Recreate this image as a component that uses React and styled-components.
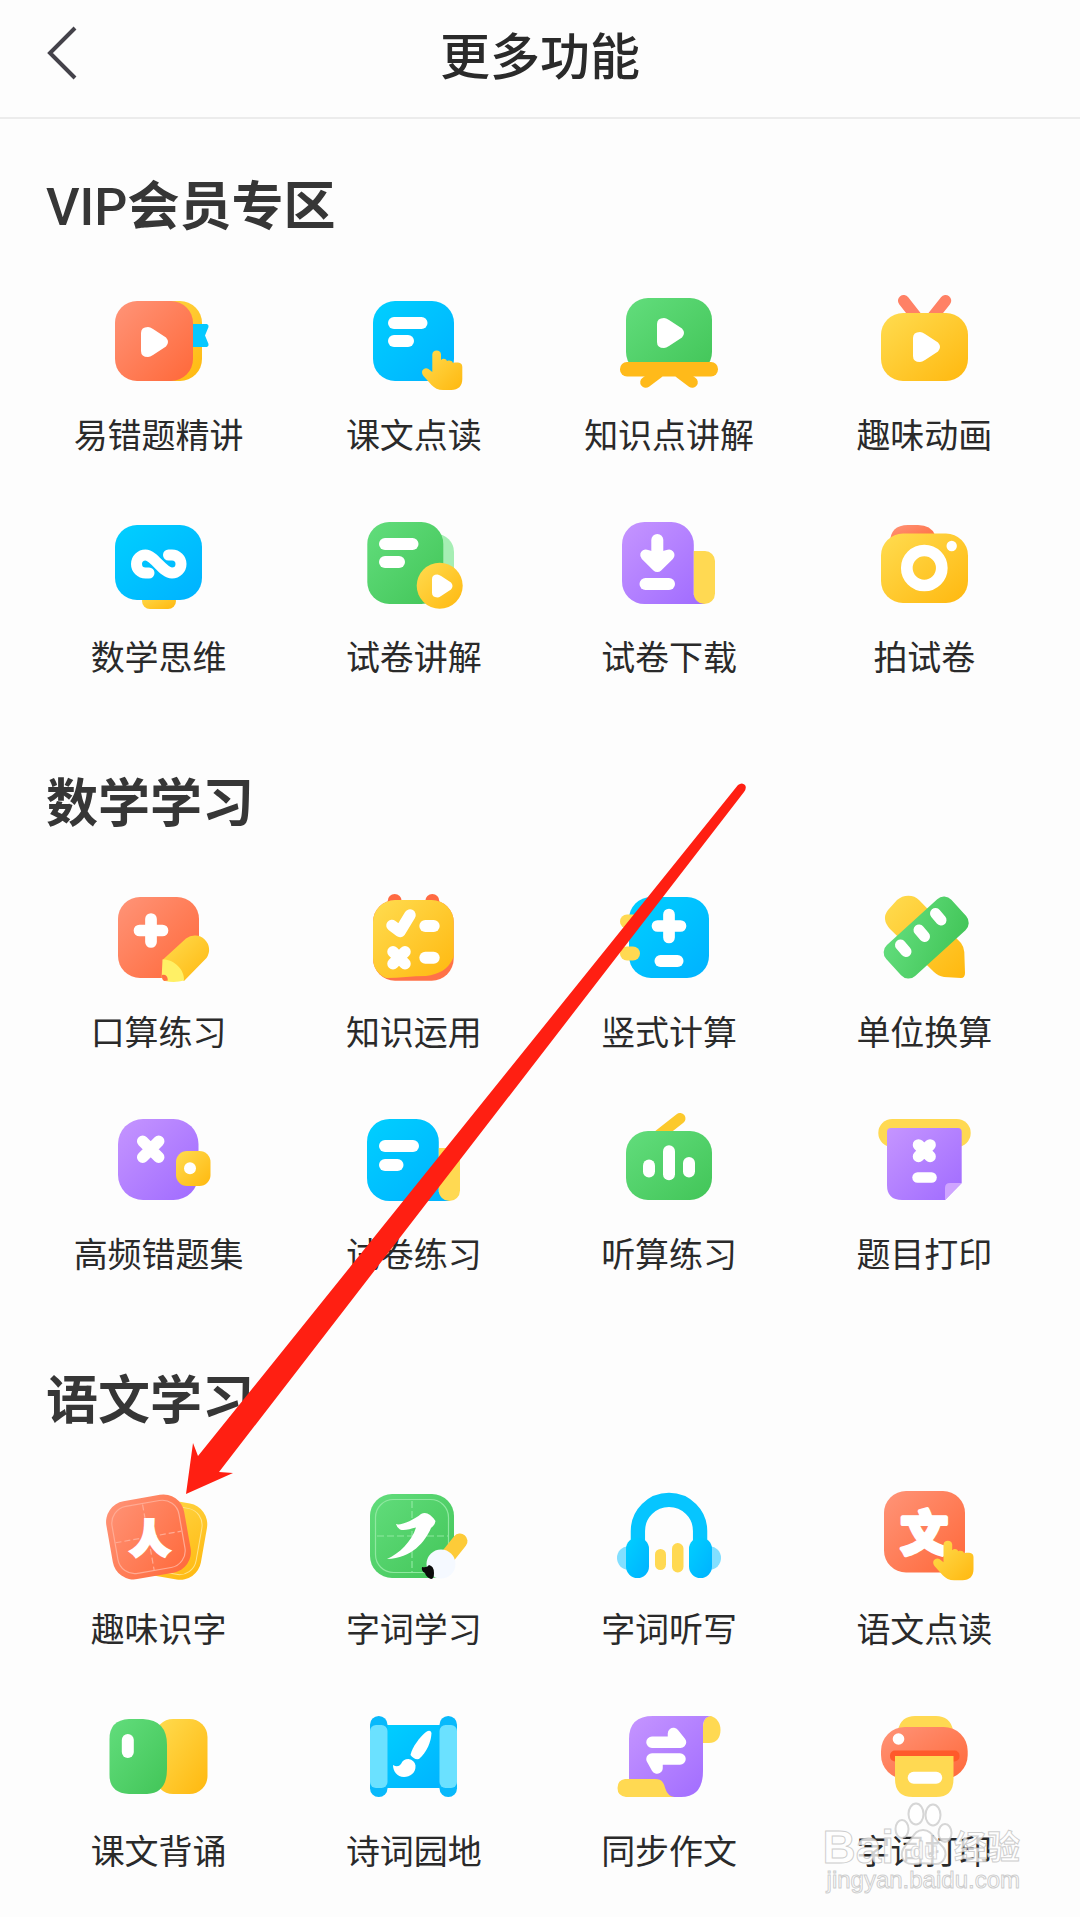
import React from 'react';
import styled, {createGlobalStyle} from 'styled-components';

const GlobalStyle = createGlobalStyle`
	* {
		box-sizing: border-box;
	}
	body {
		margin: 0;
		background: #fdfdfd;
		color: #2a2a2a;
		font-family: "Noto Sans CJK SC", sans-serif;
	}
`;

const Page = styled.div`
	position: relative;
	overflow: hidden;
`;

const Header = styled.header`
	display: grid;
	grid-template-columns: 1fr auto 1fr;
	align-items: center;
	height: 119px;
	padding: 0 40px 12px;
	border-bottom: 2px solid #ececec;
`;

const BackButton = styled.button`
	display: flex;
	justify-self: start;
	padding: 0;
	border: 0;
	background: none;
	cursor: pointer;
	svg {
		width: 44px;
		height: 60px;
	}
`;

const PageTitle = styled.h1`
	margin: 0;
	font-size: 50px;
	line-height: 60px;
	font-weight: 500;
`;

const Section = styled.section`
	padding: 57px 28px 36px 31px;
`;

const SectionTitle = styled.h2`
	margin: 0 0 63px;
	padding-left: 15px;
	color: #363636;
	font-size: 52px;
	line-height: 54px;
	font-weight: 700;
`;

const Latin = styled.span`
	font-family: Roboto, sans-serif;
	font-weight: 500;
	line-height: 0;
`;

const Grid = styled.div`
	display: grid;
	grid-template-columns: repeat(4, 1fr);
	row-gap: 57px;
`;

const Tile = styled.a`
	display: flex;
	flex-direction: column;
	align-items: center;
	gap: 17px;
	color: inherit;
	text-decoration: none;
`;

const TileIcon = styled.svg`
	width: 100px;
	height: 100px;
	overflow: visible;
	text {
		font-family: "Noto Sans CJK SC", sans-serif;
		font-weight: 900;
		text-anchor: middle;
	}
`;

const TileLabel = styled.span`
	font-size: 34px;
	line-height: 48px;
	white-space: nowrap;
`;

const Pointer = styled.svg`
	position: absolute;
	top: 0;
	left: 0;
	width: 100%;
	pointer-events: none;
`;

const Watermark = styled.div`
	position: absolute;
	right: 60px;
	bottom: 20px;
	display: flex;
	flex-direction: column;
	align-items: flex-end;
	color: rgba(255, 255, 255, 0.8);
	font-family: "Liberation Sans", "Noto Sans CJK SC", sans-serif;
	-webkit-text-stroke: 1px rgba(184, 184, 184, 0.7);
	pointer-events: none;
`;

const WatermarkBrand = styled.div`
	display: flex;
	align-items: flex-end;
	font-size: 46px;
	line-height: 46px;
	font-weight: 700;
	svg {
		width: 60px;
		height: 64px;
		margin-bottom: 4px;
	}
`;

const WatermarkSuffix = styled.span`
	font-size: 33px;
	line-height: 44px;
`;

const WatermarkSite = styled.div`
	font-size: 24px;
	line-height: 20px;
`;

const Gradient = ({id, from, to}) => (
	<linearGradient id={id} x1="0" y1="0" x2="1" y2="1">
		<stop offset="0" stopColor={from}/>
		<stop offset="1" stopColor={to}/>
	</linearGradient>
)

const RED = 'url(#red)';
const YELLOW = 'url(#yellow)';
const BLUE = 'url(#blue)';
const GREEN = 'url(#green)';
const PURPLE = 'url(#purple)';
const LEMON = '#ffd952';

// x, y - center of the left side
const Play = ({x, y, size = 1}) => (
	<path
		transform={`translate(${x} ${y}) scale(${size})`}
		d="M0 -9 Q0 -15 7 -15 Q9 -15 12 -13 L25 -4.500 Q29 0 25 4.500 L12 13 Q9 15 7 15 Q0 15 0 9z"
		fill="#fff"
	/>
)

const Bar = ({x, y, w, h}) => (
	<rect x={x} y={y} width={w} height={h} rx={Math.min(w, h) / 2} fill="#fff"/>
)

const Plus = ({x, y}) => (
	<path d={`M${x - 11.5} ${y}h23M${x} ${y - 11.5}v23`} stroke="#fff" strokeWidth="11.7" strokeLinecap="round"/>
)

const Cross = ({x, y, r}) => (
	<path
		d={`M${x - r} ${y - r}l${2 * r} ${2 * r}M${x + r} ${y - r}l${-2 * r} ${2 * r}`}
		stroke="#fff"
		strokeWidth="11.5"
		strokeLinecap="round"
	/>
)

const Hand = ({x = 0, y = 0}) => (
	<path
		transform={`translate(${x} ${y})`}
		d="M68.300 61.300a4.400 4.400 0 0 1 8.700 0V67c2-2 5-1.500 6 1c2.500-1 5-.5 6 2c5-1 9.300-.5 9.300 4V86c0 7-4 11-11 11H79c-5 0-8.500-2-11.500-5L59.500 83c-4-5 1-9.500 5-7l3.800 3z"
		fill={YELLOW}
	/>
)

// sheet with a folded tab on the right
const TabSheet = ({fill}) => (
	<>
		<path d="M26 7H52A22.500 22.500 0 0 1 74.800 30V80L86 89H26A22.500 22.500 0 0 1 3 66V30A22.500 22.500 0 0 1 26 7z" fill={fill}/>
		<path d="M74.800 36H86a10 10 0 0 1 10 10V78.500a10.600 10.600 0 0 1-21.200 0z" fill={LEMON}/>
	</>
)

const icons = {
	mistakes: (
		<>
			<rect x="20" y="8" width="73" height="80" rx="22" fill={YELLOW}/>
			<rect x="6" y="8" width="78" height="80" rx="22" fill={RED}/>
			<path d="M84 31H98q2 1 1.500 3L96 42.500L99.500 51q.5 2-1.500 3H84z" fill="#06c8ff"/>
			<Play x={32} y={49}/>
		</>
	),
	reading: (
		<>
			<rect x="9" y="8" width="81" height="80" rx="22" fill={BLUE}/>
			<Bar x={24} y={24} w={39.5} h={12}/>
			<Bar x={24} y={42} w={26} h={12}/>
			<Hand/>
		</>
	),
	knowledge: (
		<>
			<rect x="7" y="5" width="86" height="76" rx="22" fill={GREEN}/>
			<path d="M39 80L26.700 89.300M61 80L73.300 89.300" stroke="#ffba1a" strokeWidth="11" strokeLinecap="round"/>
			<rect x="1" y="69" width="98" height="14.500" rx="7" fill="#ffba1a"/>
			<Play x={38} y={40}/>
		</>
	),
	cartoon: (
		<>
			<path d="M29.700 7.700L44 26M71.500 7.700L57 26" stroke="#ff8165" strokeWidth="11.500" strokeLinecap="round"/>
			<rect x="7" y="20" width="87" height="68" rx="22" fill={YELLOW}/>
			<Play x={39} y={54}/>
		</>
	),
	thinking: (
		<>
			<rect x="33" y="78" width="34" height="16" rx="8" fill={YELLOW}/>
			<rect x="6" y="10" width="87" height="75" rx="22" fill={BLUE}/>
			<path
				d="M40 58H36.500A9 9 0 0 1 36.500 40C45 40 54 58 63 58A9 9 0 0 0 63 40H59.500"
				fill="none" stroke="#fff" strokeWidth="11" strokeLinecap="round"
			/>
		</>
	),
	paperExplain: (
		<>
			<rect x="40" y="19" width="50" height="66" rx="18" fill="#a6eeb4"/>
			<rect x="3.300" y="7" width="76" height="82" rx="22" fill={GREEN}/>
			<Bar x={15} y={23} w={39.5} h={12}/>
			<Bar x={15} y={41} w={26} h={12}/>
			<circle cx="75.700" cy="70.700" r="23" fill={YELLOW}/>
			<Play x={68} y={71} size={0.76}/>
		</>
	),
	download: (
		<>
			<TabSheet fill={PURPLE}/>
			<path d="M38.300 25V45" stroke="#fff" strokeWidth="12" strokeLinecap="round"/>
			<path d="M26.700 40L38.300 51.500L50 40L38.300 43z" fill="#fff" stroke="#fff" strokeWidth="11" strokeLinejoin="round"/>
			<Bar x={20.5} y={63} w={35.5} h={12}/>
		</>
	),
	camera: (
		<>
			<path d="M16 28q0-18 18-18H44q13 0 17 10v8z" fill={RED}/>
			<rect x="7" y="18.500" width="87" height="69.500" rx="22" fill={YELLOW}/>
			<circle cx="50.300" cy="53" r="17.500" fill="none" stroke="#fff" strokeWidth="11.700"/>
			<circle cx="77.700" cy="31" r="5.200" fill="#fff"/>
		</>
	),
	oral: (
		<>
			<rect x="9" y="7" width="81" height="81" rx="22" fill={RED}/>
			<Plus x={42} y={40.5}/>
			<path d="M53.500 70L77 48.500a14.300 14.300 0 0 1 20.500 19.500L75 91z" fill={YELLOW}/>
			<path d="M53.500 69.500C65 69 76 80 75 90.500Q66 93 56 91Q52.500 90 52.700 86z" fill="#fff065"/>
			<path d="M52.800 85q6-1 6 5.500l-3.500.5q-2.500-1-2.500-6z" fill="#ff7043"/>
		</>
	),
	apply: (
		<>
			<circle cx="30.700" cy="11" r="7" fill="#ff6a42"/>
			<circle cx="68.300" cy="11" r="7" fill="#ff6a42"/>
			<rect x="9" y="10" width="80.700" height="80.700" rx="22" fill="#ff7248"/>
			<path d="M31 10H67.700a22 22 0 0 1 22 22V67C84 80 75 84 62 86C48 86 36 88 22 88Q9 82 9 68V32A22 22 0 0 1 31 10z" fill={YELLOW}/>
			<path d="M28 35.500L36 41.500L46 25" fill="none" stroke="#fff" strokeWidth="11.500" strokeLinecap="round" strokeLinejoin="round"/>
			<Cross x={35} y={67.7} r={6}/>
			<Bar x={55.3} y={30} w={20.4} h={12}/>
			<Bar x={55.3} y={61.7} w={20.4} h={12}/>
		</>
	),
	column: (
		<>
			<rect x="10" y="7" width="80" height="81" rx="22" fill={BLUE}/>
			<rect x="1" y="24.500" width="20" height="14" rx="7" fill={LEMON}/>
			<rect x="1" y="56.500" width="20" height="14" rx="7" fill={LEMON}/>
			<Plus x={50} y={36}/>
			<Bar x={35.5} y={65} w={29} h={12}/>
		</>
	),
	units: (
		<>
			<path d="M34.300 5.700Q41 5.700 45 10L87 53Q90 57 90.300 62L91 83Q91 88 87 88L70 87Q64 86 60 82L16 39Q7 29 14 20L23 10Q28 5.700 34.300 5.700z" fill={YELLOW}/>
			<g transform="rotate(-42.300 52.200 47.600)">
				<rect x="8.200" y="26.600" width="88" height="42" rx="10" fill={GREEN}/>
			</g>
			<path d="M61.500 23.500l5.500 6.500M45 40l5.500 6.500M26.500 55l5.500 6.500" stroke="#fff" strokeWidth="11" strokeLinecap="round"/>
		</>
	),
	frequent: (
		<>
			<rect x="9" y="7" width="80.500" height="81" rx="25" fill={PURPLE}/>
			<Cross x={41.7} y={37.3} r={8}/>
			<rect x="67" y="39" width="34.500" height="35" rx="11" fill={YELLOW}/>
			<circle cx="81" cy="56.300" r="6" fill="#fff"/>
		</>
	),
	paperPractice: (
		<>
			<TabSheet fill={BLUE}/>
			<Bar x={15} y={28} w={40} h={12}/>
			<Bar x={15} y={47} w={24.5} h={12}/>
		</>
	),
	listenMath: (
		<>
			<path d="M61 6.500L40 23" stroke="#fcc92c" strokeWidth="11" strokeLinecap="round"/>
			<rect x="7" y="19" width="86" height="69" rx="22" fill={GREEN}/>
			<Bar x={24} y={47.5} w={12} h={18}/>
			<Bar x={44} y={33.3} w={12} h={35}/>
			<Bar x={64} y={45} w={12} h={20.5}/>
		</>
	),
	printTopic: (
		<>
			<rect x="4.300" y="7" width="92.400" height="28" rx="14" fill={LEMON}/>
			<path d="M17 16H84q3.700 0 3.700 4V71L71 88H28Q13 88 13 73V20q0-4 4-4z" fill={PURPLE}/>
			<path d="M87.700 71H76q-5 0-5 5V88z" fill="#cfa5ff"/>
			<Cross x={50.3} y={38.7} r={5.8}/>
			<Bar x={38.3} y={60.3} w={24.5} h={10.5}/>
		</>
	),
	literacy: (
		<>
			<rect x="18.500" y="13" width="77" height="77" rx="21" transform="rotate(10 57 51.500)" fill={YELLOW}/>
			<rect x="24" y="18" width="66.500" height="67" rx="17" transform="rotate(10 57 51.500)" fill="none" stroke="#ffe48a"/>
			<g transform="rotate(-10 39.300 50)">
				<rect x="0" y="10.500" width="79" height="79" rx="21" fill={RED}/>
				<rect x="5.500" y="16" width="68" height="68" rx="17" fill="none" stroke="#ffab94" strokeWidth="1.200"/>
				<path d="M39.300 17V84M6 50H73" stroke="#ffab94" strokeWidth="1.200" strokeDasharray="6 3"/>
				<text x="41" y="65" fontSize="38" fill="#fff" stroke="#fff" strokeWidth="4" transform="rotate(10 39 50)">人</text>
			</g>
		</>
	),
	wordStudy: (
		<>
			<rect x="6" y="7" width="84" height="84" rx="22" fill={GREEN}/>
			<rect x="11.500" y="12.500" width="73" height="73" rx="18" fill="none" stroke="#8fe8a0" strokeWidth="1.200"/>
			<path d="M48 14V85M13 49H84" stroke="#8fe8a0" strokeWidth="1.200" strokeDasharray="7 3"/>
			<path d="M32 37C36 39 50 33 57 27Q64 23 71.500 34Q71 38 67 41C61 55 48 71 23 72C35 67 48 54 52 40.500C46 42 40 44 36 42.500Q33 41 32 37z" fill="#fff"/>
			<path d="M96 54L84 69" stroke="#fdcb38" strokeWidth="15" strokeLinecap="round"/>
			<circle cx="77" cy="77" r="14.500" fill="#f5f9ff"/>
			<path d="M58 80Q63 81 65 78Q70 79 70 86Q70 92 67 92Q62 90 61 86Q57 84 58 80z" fill="#0b0b0b"/>
		</>
	),
	dictation: (
		<>
			<ellipse cx="9" cy="71" rx="11" ry="11.500" fill="#82dfff"/>
			<ellipse cx="91" cy="71" rx="11" ry="11.500" fill="#82dfff"/>
			<path d="M18.900 62V44A31.100 31.100 0 0 1 81.100 44V62" fill="none" stroke="#06c5ff" strokeWidth="14.300"/>
			<rect x="7" y="50.500" width="23" height="40.500" rx="11.500" fill={BLUE}/>
			<rect x="70" y="50.500" width="23" height="40.500" rx="11.500" fill={BLUE}/>
			<rect x="36" y="62" width="11" height="21" rx="5.500" fill={LEMON}/>
			<rect x="53" y="56" width="11.500" height="29.500" rx="5.700" fill={LEMON}/>
		</>
	),
	chineseReading: (
		<>
			<rect x="10" y="4" width="81" height="81.500" rx="22" fill={RED}/>
			<text x="50.300" y="63" fontSize="47" fill="#fff" stroke="#fff" strokeWidth="4" strokeLinejoin="round">文</text>
			<Hand x={1.2} y={-3.7}/>
		</>
	),
	recite: (
		<>
			<rect x="46" y="10" width="52.500" height="75" rx="18" fill={YELLOW}/>
			<path d="M20 10H34Q58 11 58 36V60Q58 84 38 85H20Q.5 84 .5 66V30Q.5 11 20 10z" fill={GREEN}/>
			<Bar x={12.8} y={25} w={12} h={24}/>
		</>
	),
	poetry: (
		<>
			<rect x="14" y="16" width="71" height="63" fill={BLUE}/>
			<rect x="6" y="7" width="17.500" height="81" rx="8.700" fill="#08b9fb"/>
			<rect x="75.500" y="7" width="17.500" height="81" rx="8.700" fill="#08b9fb"/>
			<rect x="6" y="16" width="17.500" height="63" rx="6" fill="#6be1ff"/>
			<rect x="75.500" y="16" width="17.500" height="63" rx="6" fill="#6be1ff"/>
			<path d="M62 23Q66.500 20 67.500 24C67 33 63 43 55 50Q50 51 46.500 46C48 38 56 28 62 23z" fill="#fff"/>
			<path d="M44.500 50q6 1 7 6.500C52 64 46 68 40 68C33 68 29 62 29 56q5 3 8-1Q39 50 44.500 50z" fill="#fff"/>
		</>
	),
	writing: (
		<>
			<path d="M84 34V18C84 11 87 7 92 7C98 9 101.500 14 101.500 21S98 34 90 34z" fill={LEMON}/>
			<path d="M34 7H92C86 8 84 12 84 18V62Q84 88 62 88H50L10 72V30Q10 7 34 7z" fill={PURPLE}/>
			<path d="M6 70H36c8 0 9 5 10.500 10q2 7 9 8H7q-8.500-1-8.500-9T6 70z" fill={LEMON}/>
			<path d="M33 33.300H61.500L54.500 24.500V33M61 50H33L38 59V50" fill="#fff" stroke="#fff" strokeWidth="11.500" strokeLinecap="round" strokeLinejoin="round"/>
		</>
	),
	printWords: (
		<>
			<path d="M24 21Q27 7 41 7H62Q76 7 79 21z" fill={LEMON}/>
			<rect x="7" y="18" width="86.700" height="52" rx="24" fill={RED}/>
			<rect x="16" y="41.500" width="69.500" height="11" rx="5" fill="#ff5a2b"/>
			<path d="M21 47H79.500V70Q79.500 88 62 88H39Q21 88 21 70z" fill={LEMON}/>
			<circle cx="24.500" cy="30" r="5.800" fill="#fff"/>
			<Bar x={33.7} y={62.7} w={34.5} h={12}/>
		</>
	),
};

const sections = [
	{
		latin: 'VIP',
		title: '会员专区',
		items: [
			['易错题精讲', 'mistakes'], ['课文点读', 'reading'], ['知识点讲解', 'knowledge'], ['趣味动画', 'cartoon'],
			['数学思维', 'thinking'], ['试卷讲解', 'paperExplain'], ['试卷下载', 'download'], ['拍试卷', 'camera'],
		]
	},
	{
		title: '数学学习',
		items: [
			['口算练习', 'oral'], ['知识运用', 'apply'], ['竖式计算', 'column'], ['单位换算', 'units'],
			['高频错题集', 'frequent'], ['试卷练习', 'paperPractice'], ['听算练习', 'listenMath'], ['题目打印', 'printTopic'],
		]
	},
	{
		title: '语文学习',
		items: [
			['趣味识字', 'literacy'], ['字词学习', 'wordStudy'], ['字词听写', 'dictation'], ['语文点读', 'chineseReading'],
			['课文背诵', 'recite'], ['诗词园地', 'poetry'], ['同步作文', 'writing'], ['字词打印', 'printWords'],
		]
	},
];

const FeatureSection = ({latin, title, items}) => {
	return (
		<Section>
			<SectionTitle>{latin && <Latin>{latin}</Latin>}{title}</SectionTitle>
			<Grid>
				{items.map(([label, icon]) => (
					<Tile href={`#${icon}`} key={icon}>
						<TileIcon viewBox="0 0 100 100" aria-hidden="true">{icons[icon]}</TileIcon>
						<TileLabel>{label}</TileLabel>
					</Tile>
				))}
			</Grid>
		</Section>
	)
}

const Arrow = () => (
	<Pointer viewBox="0 0 1080 1917" aria-hidden="true">
		<defs>
			<Gradient id="red" from="#ff9478" to="#ff6839"/>
			<Gradient id="yellow" from="#ffdc50" to="#ffb80f"/>
			<Gradient id="blue" from="#00cfff" to="#00b2ff"/>
			<Gradient id="green" from="#62dd7c" to="#42c558"/>
			<Gradient id="purple" from="#c595ff" to="#a06bff"/>
		</defs>
		<path
			d="M738 785Q742 782 745 785Q747 788 744 792L219 1472L233 1473L186 1494L193 1443L198 1456z"
			fill="#ff1f12"
		/>
	</Pointer>
)

const BaiduMark = () => (
	<Watermark>
		<WatermarkBrand>
			<span>Bai</span>
			<svg viewBox="0 0 60 64" fill="rgba(255,255,255,0.8)" stroke="rgba(196,196,196,0.7)" strokeWidth="2">
				<ellipse cx="22" cy="12" rx="7.500" ry="10.500"/>
				<ellipse cx="39" cy="13" rx="7.500" ry="10.500"/>
				<ellipse cx="8" cy="27" rx="6.500" ry="9"/>
				<ellipse cx="51" cy="31" rx="6.500" ry="9"/>
				<path d="M29 28C38 28 40 37 47 43C56 51 50 63 40 62C33 61 27 61 20 62C8 63 4 52 12 43C19 37 20 28 29 28z"/>
				<text x="30" y="57" fontSize="23" textAnchor="middle" strokeWidth="1">du</text>
			</svg>
			<WatermarkSuffix>经验</WatermarkSuffix>
		</WatermarkBrand>
		<WatermarkSite>jingyan.baidu.com</WatermarkSite>
	</Watermark>
)

function App() {
	return (
		<Page>
			<GlobalStyle/>
			<Header>
				<BackButton type="button" aria-label="返回">
					<svg viewBox="0 0 44 60" fill="none" stroke="#44424a" strokeWidth="4">
						<path d="M35 5L10 30L35 55"/>
					</svg>
				</BackButton>
				<PageTitle>更多功能</PageTitle>
			</Header>
			<main>
				{sections.map(section => (
					<FeatureSection key={section.title} {...section}/>
				))}
			</main>
			<Arrow/>
			<BaiduMark/>
		</Page>
	);
}

export default App;
